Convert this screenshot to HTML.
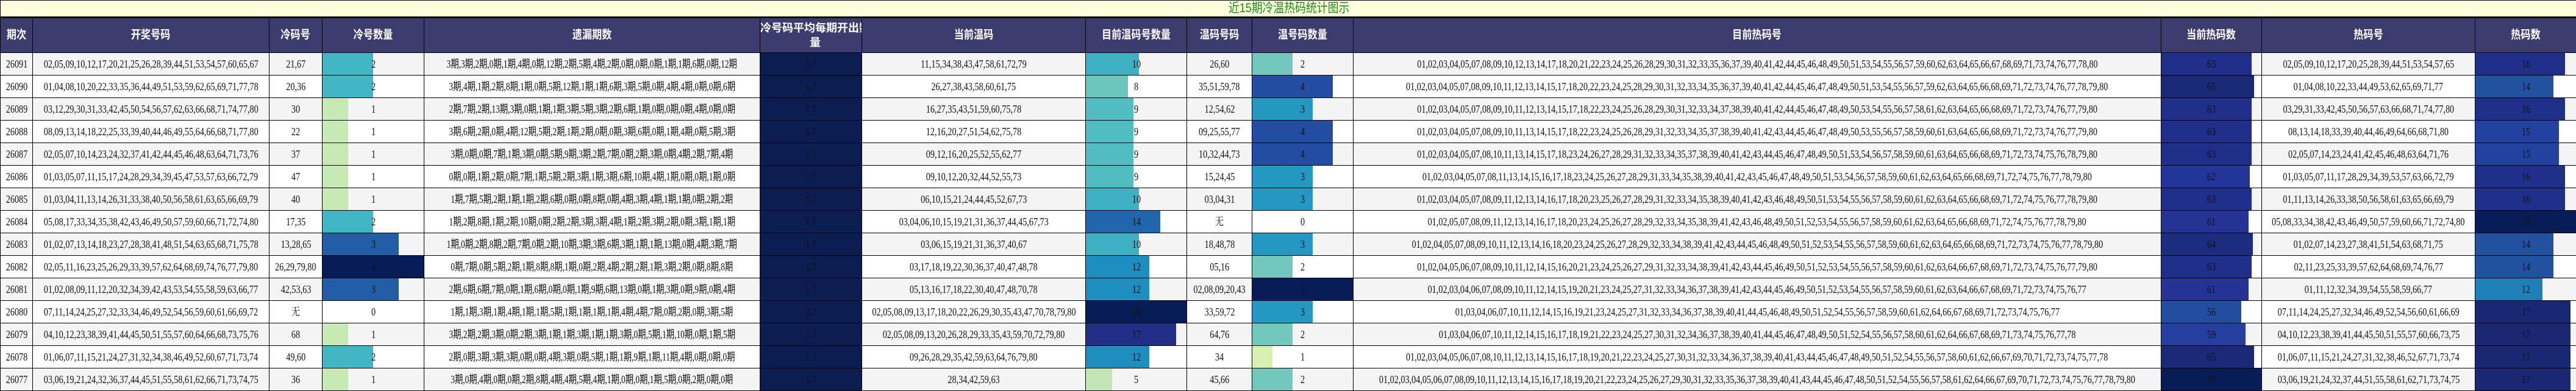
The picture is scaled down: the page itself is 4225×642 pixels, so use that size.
<!DOCTYPE html>
<html><head><meta charset="utf-8">
<style>
html,body{margin:0;padding:0;background:#fff;width:4225px;height:642px;overflow:hidden}
table{border-collapse:collapse;table-layout:fixed;width:4225px;font-family:"Liberation Serif","Noto Serif CJK SC","Noto Sans CJK SC",serif;color:#111}
td{border:1px solid #000;padding:0;text-align:center;white-space:nowrap;overflow:hidden;position:relative;height:36px;font-size:0;line-height:0}
.t,.m{display:inline-block;vertical-align:top;height:36px;line-height:37px;font-size:18px;white-space:nowrap;position:relative;z-index:1;margin:0 -800px;transform:scaleX(.79)}
.m{transform:scaleX(.74);font-family:"Liberation Serif","Noto Sans CJK SC",serif}
tr.title td{height:26px;background:#fefedc;border-bottom:3px solid #000;text-align:left}
tr.title .t{height:26px;line-height:26px;font-size:21px;color:#1b8c1b;font-family:"Liberation Sans","Noto Sans CJK SC",sans-serif;margin:0 0 0 2014px;transform:scaleX(.85);transform-origin:left}
tr.hd td{height:56px;background:#3c3c6e}
tr.hd .t{height:56px;line-height:56px;font-size:19px;color:#fff;font-weight:bold;font-family:"Liberation Sans","Noto Sans CJK SC",sans-serif;transform:scaleX(.85)}
tr.hd .h2{display:inline-block;vertical-align:top;height:56px;padding-top:4px;box-sizing:border-box;line-height:24px;font-size:18px;color:#fff;font-weight:bold;font-family:"Liberation Sans","Noto Sans CJK SC",sans-serif;white-space:nowrap}
tr.o td{background:#f4f4f4}
tr.e td{background:#fff}
td i{position:absolute;left:0;top:0;bottom:0;display:block}
td.nv{background:#0b1d51!important}
</style></head><body>
<table>
<colgroup>
<col style="width:53px"><col style="width:388px"><col style="width:87px"><col style="width:167px"><col style="width:551px"><col style="width:167px"><col style="width:367px"><col style="width:166px"><col style="width:107px"><col style="width:166px"><col style="width:1325px"><col style="width:165px"><col style="width:350px"><col style="width:166px">
</colgroup>
<tr class="title"><td colspan="14"><span class="t">近15期冷温热码统计图示</span></td></tr>
<tr class="hd">
<td><span class="t">期次</span></td><td><span class="t">开奖号码</span></td><td><span class="t">冷码号</span></td><td><span class="t">冷号数量</span></td><td><span class="t">遗漏期数</span></td><td><span class="h2">冷号码平均每期开出数<br>量</span></td><td><span class="t">当前温码</span></td><td><span class="t">目前温码号数量</span></td><td><span class="t">温码号码</span></td><td><span class="t">温号码数量</span></td><td><span class="t">目前热码号</span></td><td><span class="t">当前热码数</span></td><td><span class="t">热码号</span></td><td><span class="t">热码数</span></td>
</tr>

<tr class="o"><td><span class="t">26091</span></td><td><span class="t">02,05,09,10,12,17,20,21,25,26,28,39,44,51,53,54,57,60,65,67</span></td><td><span class="t">21,67</span></td><td><i style="width:50%;background:#41b6c4"></i><span class="t">2</span></td><td><span class="m">3期,3期,2期,0期,1期,4期,0期,12期,2期,5期,4期,2期,0期,0期,0期,1期,1期,6期,0期,12期</span></td><td class="nv"><span class="t">1.7</span></td><td><span class="t">11,15,34,38,43,47,58,61,72,79</span></td><td><i style="width:52.6%;background:#3db1c3"></i><span class="t">10</span></td><td><span class="t">26,60</span></td><td><i style="width:40%;background:#73c8bd"></i><span class="t">2</span></td><td><span class="t">01,02,03,04,05,07,08,09,10,12,13,14,17,18,20,21,22,23,24,25,26,28,29,30,31,32,33,35,36,37,39,40,41,42,44,45,46,48,49,50,51,53,54,55,56,57,59,60,62,63,64,65,66,67,68,69,71,73,74,76,77,78,80</span></td><td><i style="width:90%;background:#202f8a"></i><span class="t">63</span></td><td><span class="t">02,05,09,10,12,17,20,25,28,39,44,51,53,54,57,65</span></td><td><i style="width:88.9%;background:#20308a"></i><span class="t">16</span></td></tr>

<tr class="e"><td><span class="t">26090</span></td><td><span class="t">01,04,08,10,20,22,33,35,36,44,49,51,53,59,62,65,69,71,77,78</span></td><td><span class="t">20,36</span></td><td><i style="width:50%;background:#41b6c4"></i><span class="t">2</span></td><td><span class="m">3期,4期,1期,2期,8期,1期,0期,5期,12期,1期,1期,6期,3期,5期,0期,4期,4期,0期,0期,6期</span></td><td class="nv"><span class="t">1.7</span></td><td><span class="t">26,27,38,43,58,60,61,75</span></td><td><i style="width:42.1%;background:#6cc6be"></i><span class="t">8</span></td><td><span class="t">35,51,59,78</span></td><td><i style="width:80%;background:#234da0"></i><span class="t">4</span></td><td><span class="t">01,02,03,04,05,07,08,09,10,11,12,13,14,15,17,18,20,22,23,24,25,28,29,30,31,32,33,34,35,36,37,39,40,41,42,44,45,46,47,48,49,50,51,53,54,55,56,57,59,62,63,64,65,66,68,69,71,72,73,74,76,77,78,79,80</span></td><td><i style="width:92.9%;background:#1a2a78"></i><span class="t">65</span></td><td><span class="t">01,04,08,10,22,33,44,49,53,62,65,69,71,77</span></td><td><i style="width:77.8%;background:#2251a0"></i><span class="t">14</span></td></tr>

<tr class="o"><td><span class="t">26089</span></td><td><span class="t">03,12,29,30,31,33,42,45,50,54,56,57,62,63,66,68,71,74,77,80</span></td><td><span class="t">30</span></td><td><i style="width:25%;background:#c7e9b4"></i><span class="t">1</span></td><td><span class="m">2期,7期,2期,13期,3期,0期,1期,1期,3期,5期,3期,2期,6期,1期,0期,0期,0期,4期,0期,0期</span></td><td class="nv"><span class="t">1.7</span></td><td><span class="t">16,27,35,43,51,59,60,75,78</span></td><td><i style="width:47.4%;background:#51bcc2"></i><span class="t">9</span></td><td><span class="t">12,54,62</span></td><td><i style="width:60%;background:#2498c1"></i><span class="t">3</span></td><td><span class="t">01,02,03,04,05,07,08,09,10,11,12,13,14,15,17,18,22,23,24,25,26,28,29,30,31,32,33,34,37,38,39,40,41,42,44,45,46,47,48,49,50,53,54,55,56,57,58,61,62,63,64,65,66,68,69,71,72,73,74,76,77,79,80</span></td><td><i style="width:90%;background:#202f8a"></i><span class="t">63</span></td><td><span class="t">03,29,31,33,42,45,50,56,57,63,66,68,71,74,77,80</span></td><td><i style="width:88.9%;background:#20308a"></i><span class="t">16</span></td></tr>

<tr class="e"><td><span class="t">26088</span></td><td><span class="t">08,09,13,14,18,22,25,33,39,40,44,46,49,55,64,66,68,71,77,80</span></td><td><span class="t">22</span></td><td><i style="width:25%;background:#c7e9b4"></i><span class="t">1</span></td><td><span class="m">3期,6期,2期,0期,4期,12期,5期,2期,1期,2期,0期,0期,3期,6期,0期,1期,4期,0期,5期,3期</span></td><td class="nv"><span class="t">1.7</span></td><td><span class="t">12,16,20,27,51,54,62,75,78</span></td><td><i style="width:47.4%;background:#51bcc2"></i><span class="t">9</span></td><td><span class="t">09,25,55,77</span></td><td><i style="width:80%;background:#234da0"></i><span class="t">4</span></td><td><span class="t">01,02,03,04,05,07,08,09,10,11,13,14,15,17,18,22,23,24,25,26,28,29,31,32,33,34,35,37,38,39,40,41,42,43,44,45,46,47,48,49,50,53,55,56,57,58,59,60,61,63,64,65,66,68,69,71,72,73,74,76,77,79,80</span></td><td><i style="width:90%;background:#202f8a"></i><span class="t">63</span></td><td><span class="t">08,13,14,18,33,39,40,44,46,49,64,66,68,71,80</span></td><td><i style="width:83.3%;background:#2342a0"></i><span class="t">15</span></td></tr>

<tr class="o"><td><span class="t">26087</span></td><td><span class="t">02,05,07,10,14,23,24,32,37,41,42,44,45,46,48,63,64,71,73,76</span></td><td><span class="t">37</span></td><td><i style="width:25%;background:#c7e9b4"></i><span class="t">1</span></td><td><span class="m">3期,0期,0期,7期,1期,3期,0期,5期,9期,3期,2期,7期,0期,2期,3期,0期,4期,2期,7期,4期</span></td><td class="nv"><span class="t">1.7</span></td><td><span class="t">09,12,16,20,25,52,55,62,77</span></td><td><i style="width:47.4%;background:#51bcc2"></i><span class="t">9</span></td><td><span class="t">10,32,44,73</span></td><td><i style="width:80%;background:#234da0"></i><span class="t">4</span></td><td><span class="t">01,02,03,04,05,07,08,10,11,13,14,15,17,18,23,24,26,27,28,29,31,32,33,34,35,37,38,39,40,41,42,43,44,45,46,47,48,49,50,51,53,54,56,57,58,59,60,61,63,64,65,66,68,69,71,72,73,74,75,76,78,79,80</span></td><td><i style="width:90%;background:#202f8a"></i><span class="t">63</span></td><td><span class="t">02,05,07,14,23,24,41,42,45,46,48,63,64,71,76</span></td><td><i style="width:83.3%;background:#2342a0"></i><span class="t">15</span></td></tr>

<tr class="e"><td><span class="t">26086</span></td><td><span class="t">01,03,05,07,11,15,17,24,28,29,34,39,45,47,53,57,63,66,72,79</span></td><td><span class="t">47</span></td><td><i style="width:25%;background:#c7e9b4"></i><span class="t">1</span></td><td><span class="m">0期,0期,1期,2期,0期,7期,1期,5期,2期,3期,1期,3期,6期,10期,4期,1期,0期,0期,1期,0期</span></td><td class="nv"><span class="t">1.7</span></td><td><span class="t">09,10,12,20,32,44,52,55,73</span></td><td><i style="width:47.4%;background:#51bcc2"></i><span class="t">9</span></td><td><span class="t">15,24,45</span></td><td><i style="width:60%;background:#2498c1"></i><span class="t">3</span></td><td><span class="t">01,02,03,04,05,07,08,11,13,14,15,16,17,18,23,24,25,26,27,28,29,31,33,34,35,38,39,40,41,42,43,45,46,47,48,49,50,51,53,54,56,57,58,59,60,61,62,63,64,65,66,68,69,71,72,74,75,76,77,78,79,80</span></td><td><i style="width:88.6%;background:#24359a"></i><span class="t">62</span></td><td><span class="t">01,03,05,07,11,17,28,29,34,39,53,57,63,66,72,79</span></td><td><i style="width:88.9%;background:#20308a"></i><span class="t">16</span></td></tr>

<tr class="o"><td><span class="t">26085</span></td><td><span class="t">01,03,04,11,13,14,26,31,33,38,40,50,56,58,61,63,65,66,69,79</span></td><td><span class="t">40</span></td><td><i style="width:25%;background:#c7e9b4"></i><span class="t">1</span></td><td><span class="m">1期,7期,5期,2期,1期,1期,2期,6期,0期,0期,8期,0期,4期,3期,4期,1期,1期,0期,2期,2期</span></td><td class="nv"><span class="t">1.7</span></td><td><span class="t">06,10,15,21,24,44,45,52,67,73</span></td><td><i style="width:52.6%;background:#3db1c3"></i><span class="t">10</span></td><td><span class="t">03,04,31</span></td><td><i style="width:60%;background:#2498c1"></i><span class="t">3</span></td><td><span class="t">01,02,03,04,05,07,08,09,11,12,13,14,16,17,18,20,23,25,26,27,28,29,31,32,33,34,35,38,39,40,41,42,43,46,48,49,50,51,53,54,55,56,57,58,59,60,61,62,63,64,65,66,68,69,71,72,74,75,76,77,78,79,80</span></td><td><i style="width:90%;background:#202f8a"></i><span class="t">63</span></td><td><span class="t">01,11,13,14,26,33,38,50,56,58,61,63,65,66,69,79</span></td><td><i style="width:88.9%;background:#20308a"></i><span class="t">16</span></td></tr>

<tr class="e"><td><span class="t">26084</span></td><td><span class="t">05,08,17,33,34,35,38,42,43,46,49,50,57,59,60,66,71,72,74,80</span></td><td><span class="t">17,35</span></td><td><i style="width:50%;background:#41b6c4"></i><span class="t">2</span></td><td><span class="m">1期,2期,8期,1期,2期,10期,0期,2期,2期,3期,3期,4期,1期,2期,3期,2期,0期,3期,1期,1期</span></td><td class="nv"><span class="t">1.7</span></td><td><span class="t">03,04,06,10,15,19,21,31,36,37,44,45,67,73</span></td><td><i style="width:73.7%;background:#2166ac"></i><span class="t">14</span></td><td><span class="t">无</span></td><td><span class="t">0</span></td><td><span class="t">01,02,05,07,08,09,11,12,13,14,16,17,18,20,23,24,25,26,27,28,29,32,33,34,35,38,39,41,42,43,46,48,49,50,51,52,53,54,55,56,57,58,59,60,61,62,63,64,65,66,68,69,71,72,74,75,76,77,78,79,80</span></td><td><i style="width:87.1%;background:#253494"></i><span class="t">61</span></td><td><span class="t">05,08,33,34,38,42,43,46,49,50,57,59,60,66,71,72,74,80</span></td><td><i style="width:100%;background:#081d58"></i><span class="t">18</span></td></tr>

<tr class="o"><td><span class="t">26083</span></td><td><span class="t">01,02,07,13,14,18,23,27,28,38,41,48,51,54,63,65,68,71,75,78</span></td><td><span class="t">13,28,65</span></td><td><i style="width:75%;background:#225ea8"></i><span class="t">3</span></td><td><span class="m">1期,0期,2期,8期,2期,7期,0期,2期,10期,3期,3期,6期,3期,1期,1期,13期,0期,4期,3期,7期</span></td><td class="nv"><span class="t">1.7</span></td><td><span class="t">03,06,15,19,21,31,36,37,40,67</span></td><td><i style="width:52.6%;background:#3db1c3"></i><span class="t">10</span></td><td><span class="t">18,48,78</span></td><td><i style="width:60%;background:#2498c1"></i><span class="t">3</span></td><td><span class="t">01,02,04,05,07,08,09,10,11,12,13,14,16,18,20,23,24,25,26,27,28,29,32,33,34,38,39,41,42,43,44,45,46,48,49,50,51,52,53,54,55,56,57,58,59,60,61,62,63,64,65,66,68,69,71,72,73,74,75,76,77,78,79,80</span></td><td><i style="width:91.4%;background:#1c2c7e"></i><span class="t">64</span></td><td><span class="t">01,02,07,14,23,27,38,41,51,54,63,68,71,75</span></td><td><i style="width:77.8%;background:#2251a0"></i><span class="t">14</span></td></tr>

<tr class="e"><td><span class="t">26082</span></td><td><span class="t">02,05,11,16,23,25,26,29,33,39,57,62,64,68,69,74,76,77,79,80</span></td><td><span class="t">26,29,79,80</span></td><td><i style="width:100%;background:#081d58"></i><span class="t">4</span></td><td><span class="m">0期,7期,0期,5期,2期,1期,8期,8期,1期,0期,2期,4期,2期,2期,1期,3期,2期,0期,8期,8期</span></td><td class="nv"><span class="t">1.7</span></td><td><span class="t">03,17,18,19,22,30,36,37,40,47,48,78</span></td><td><i style="width:63.2%;background:#1e8dc0"></i><span class="t">12</span></td><td><span class="t">05,16</span></td><td><i style="width:40%;background:#73c8bd"></i><span class="t">2</span></td><td><span class="t">01,02,04,05,06,07,08,09,10,11,12,14,15,16,20,21,23,24,25,26,27,29,31,32,33,34,38,39,41,42,43,44,45,46,49,50,51,52,53,54,55,56,57,58,59,60,61,62,63,64,66,67,68,69,71,72,73,74,75,76,77,79,80</span></td><td><i style="width:90%;background:#202f8a"></i><span class="t">63</span></td><td><span class="t">02,11,23,25,33,39,57,62,64,68,69,74,76,77</span></td><td><i style="width:77.8%;background:#2251a0"></i><span class="t">14</span></td></tr>

<tr class="o"><td><span class="t">26081</span></td><td><span class="t">01,02,08,09,11,12,20,32,34,39,42,43,53,54,55,58,59,63,66,77</span></td><td><span class="t">42,53,63</span></td><td><i style="width:75%;background:#225ea8"></i><span class="t">3</span></td><td><span class="m">2期,6期,6期,7期,0期,1期,6期,0期,0期,1期,9期,6期,13期,0期,1期,3期,0期,9期,0期,4期</span></td><td class="nv"><span class="t">1.7</span></td><td><span class="t">05,13,16,17,18,22,30,40,47,48,70,78</span></td><td><i style="width:63.2%;background:#1e8dc0"></i><span class="t">12</span></td><td><span class="t">02,08,09,20,43</span></td><td><i style="width:100%;background:#081d58"></i><span class="t">5</span></td><td><span class="t">01,02,03,04,06,07,08,09,10,11,12,14,15,19,20,21,23,24,25,27,31,32,33,34,36,37,38,39,41,42,43,44,45,46,49,50,51,52,53,54,55,56,57,58,59,60,61,62,63,64,66,67,68,69,71,72,73,74,75,76,77</span></td><td><i style="width:87.1%;background:#253494"></i><span class="t">61</span></td><td><span class="t">01,11,12,32,34,39,54,55,58,59,66,77</span></td><td><i style="width:66.7%;background:#1f80b8"></i><span class="t">12</span></td></tr>

<tr class="e"><td><span class="t">26080</span></td><td><span class="t">07,11,14,24,25,27,32,33,34,46,49,52,54,56,59,60,61,66,69,72</span></td><td><span class="t">无</span></td><td><span class="t">0</span></td><td><span class="m">1期,1期,3期,1期,4期,1期,1期,5期,1期,1期,1期,1期,4期,4期,7期,0期,2期,0期,3期,5期</span></td><td class="nv"><span class="t">1.7</span></td><td><span class="t">02,05,08,09,13,17,18,20,22,26,29,30,35,43,47,70,78,79,80</span></td><td><i style="width:100%;background:#081d58"></i><span class="t">19</span></td><td><span class="t">33,59,72</span></td><td><i style="width:60%;background:#2498c1"></i><span class="t">3</span></td><td><span class="t">01,03,04,06,07,10,11,12,14,15,16,19,21,23,24,25,27,31,32,33,34,36,37,38,39,40,41,44,45,46,48,49,50,51,52,54,55,56,57,58,59,60,61,62,64,66,67,68,69,71,72,73,74,75,76,77</span></td><td><i style="width:80%;background:#234ea0"></i><span class="t">56</span></td><td><span class="t">07,11,14,24,25,27,32,34,46,49,52,54,56,60,61,66,69</span></td><td><i style="width:94.4%;background:#1a2873"></i><span class="t">17</span></td></tr>

<tr class="o"><td><span class="t">26079</span></td><td><span class="t">04,10,12,23,38,39,41,44,45,50,51,55,57,60,64,66,68,73,75,76</span></td><td><span class="t">68</span></td><td><i style="width:25%;background:#c7e9b4"></i><span class="t">1</span></td><td><span class="m">3期,2期,2期,3期,0期,2期,3期,1期,1期,3期,1期,1期,3期,0期,5期,1期,10期,0期,1期,5期</span></td><td class="nv"><span class="t">1.7</span></td><td><span class="t">02,05,08,09,13,20,26,28,29,33,35,43,59,70,72,79,80</span></td><td><i style="width:89.5%;background:#222f88"></i><span class="t">17</span></td><td><span class="t">64,76</span></td><td><i style="width:40%;background:#73c8bd"></i><span class="t">2</span></td><td><span class="t">01,03,04,06,07,10,11,12,14,15,16,17,18,19,21,22,23,24,25,27,30,31,32,34,36,37,38,39,40,41,44,45,46,47,48,49,50,51,52,54,55,56,57,58,60,61,62,64,66,67,68,69,71,73,74,75,76,77,78</span></td><td><i style="width:84.3%;background:#253fa0"></i><span class="t">59</span></td><td><span class="t">04,10,12,23,38,39,41,44,45,50,51,55,57,60,66,73,75</span></td><td><i style="width:94.4%;background:#1a2873"></i><span class="t">17</span></td></tr>

<tr class="e"><td><span class="t">26078</span></td><td><span class="t">01,06,07,11,15,21,24,27,31,32,34,38,46,49,52,60,67,71,73,74</span></td><td><span class="t">49,60</span></td><td><i style="width:50%;background:#41b6c4"></i><span class="t">2</span></td><td><span class="m">2期,0期,3期,3期,3期,0期,0期,4期,3期,0期,5期,1期,1期,9期,1期,11期,4期,0期,0期,0期</span></td><td class="nv"><span class="t">1.7</span></td><td><span class="t">09,26,28,29,35,42,59,63,64,76,79,80</span></td><td><i style="width:63.2%;background:#1e8dc0"></i><span class="t">12</span></td><td><span class="t">34</span></td><td><i style="width:20%;background:#d9f0b3"></i><span class="t">1</span></td><td><span class="t">01,02,03,04,05,06,07,08,10,11,12,13,14,15,16,17,18,19,20,21,22,23,24,25,27,30,31,32,33,34,36,37,38,39,40,41,43,44,45,46,47,48,49,50,51,52,54,55,56,57,58,60,61,62,66,67,69,70,71,72,73,74,75,77,78</span></td><td><i style="width:92.9%;background:#1a2a78"></i><span class="t">65</span></td><td><span class="t">01,06,07,11,15,21,24,27,31,32,38,46,52,67,71,73,74</span></td><td><i style="width:94.4%;background:#1a2873"></i><span class="t">17</span></td></tr>

<tr class="o"><td><span class="t">26077</span></td><td><span class="t">03,06,19,21,24,32,36,37,44,45,51,55,58,61,62,66,71,73,74,75</span></td><td><span class="t">36</span></td><td><i style="width:25%;background:#c7e9b4"></i><span class="t">1</span></td><td><span class="m">3期,0期,4期,0期,0期,2期,8期,4期,4期,5期,4期,1期,0期,0期,1期,5期,0期,2期,0期,0期</span></td><td class="nv"><span class="t">1.7</span></td><td><span class="t">28,34,42,59,63</span></td><td><i style="width:26.3%;background:#c2e6b6"></i><span class="t">5</span></td><td><span class="t">45,66</span></td><td><i style="width:40%;background:#73c8bd"></i><span class="t">2</span></td><td><span class="t">01,02,03,04,05,06,07,08,09,10,11,12,13,14,15,16,17,18,19,20,21,22,23,24,25,26,27,29,30,31,32,33,35,36,37,38,39,40,41,43,44,45,46,47,48,50,51,52,54,55,56,57,58,61,62,64,66,67,69,70,71,72,73,74,75,76,77,78,79,80</span></td><td><i style="width:100%;background:#081d58"></i><span class="t">70</span></td><td><span class="t">03,06,19,21,24,32,37,44,51,55,58,61,62,71,73,74,75</span></td><td><i style="width:94.4%;background:#1a2873"></i><span class="t">17</span></td></tr>
</table>
</body></html>
